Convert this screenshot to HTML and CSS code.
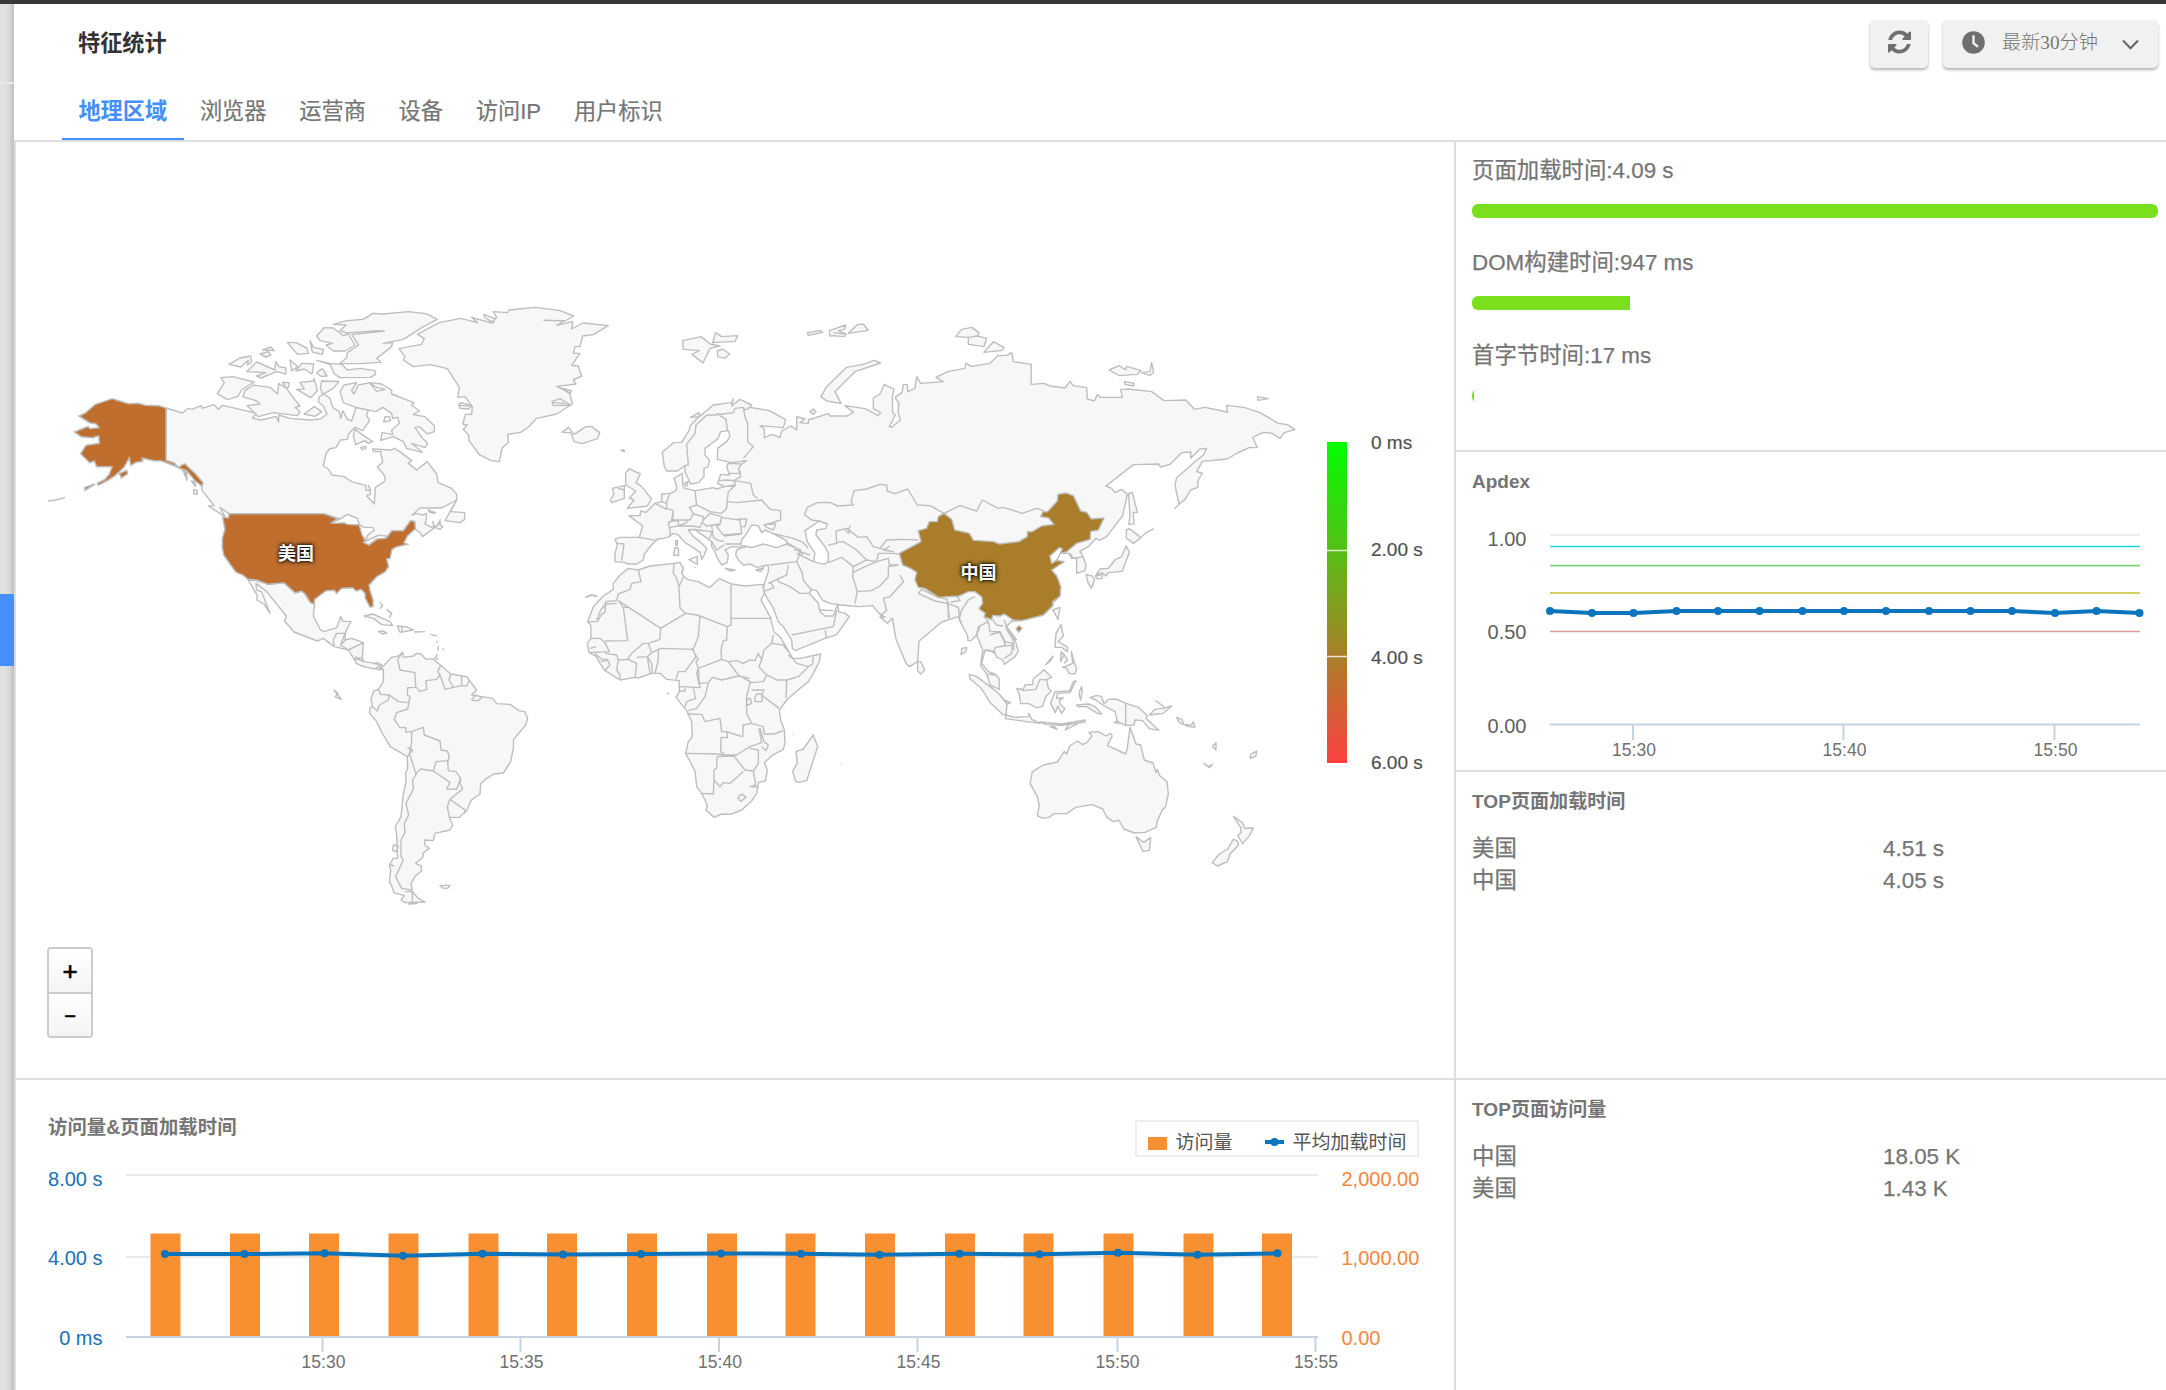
FILE: index.html
```html
<!DOCTYPE html>
<html lang="zh-CN">
<head>
<meta charset="utf-8">
<title>特征统计</title>
<link rel="stylesheet" href="styles.css">
</head>
<body>
<div class="topbar"></div>
<div class="shell">
<aside class="rail"><div class="rail-head"></div><div class="rail-active"></div></aside>
<div class="page">
<header class="header">
  <div class="title-row">
    <h1>特征统计</h1>
    <div class="tools">
      <button class="btn btn-refresh" aria-label="刷新"><svg width="23" height="24" viewBox="0 0 1536 1536"><path fill="#6f6f6f" d="M1511 928q0 5-1 7-64 268-268 434.500T764 1536q-146 0-282.500-55T238 1324l-129 129q-19 19-45 19t-45-19-19-45V960q0-26 19-45t45-19h448q26 0 45 19t19 45-19 45l-137 137q71 66 161 102t187 36q134 0 250-65t186-179q11-17 53-117 8-23 30-23h192q13 0 22.500 9.500t9.500 22.500zm25-800v448q0 26-19 45t-45 19h-448q-26 0-45-19t-19-45 19-45l138-138Q969 256 768 256q-134 0-250 65T332 500q-11 17-53 117-8 23-30 23H50q-13 0-22.500-9.500T18 608v-7q65-268 270-434.500T768 0q146 0 284 55.500T1297 212l130-129q19-19 45-19t45 19 19 45z"/></svg></button>
      <button class="btn btn-time"><svg width="23" height="23" viewBox="0 0 23 23"><circle cx="11.500" cy="11.500" r="11.300" fill="#6f6f6f"/><path d="M11.500 4.200v8l4.500 3.600" fill="none" stroke="#f1f1f1" stroke-width="2.400"/></svg><span>最新30分钟</span><svg width="17" height="11" viewBox="0 0 17 11"><path d="M1 1.500l7.500 7.800L16 1.500" fill="none" stroke="#666" stroke-width="2.100"/></svg></button>
    </div>
  </div>
  <nav class="tabs"><a class="tab active">地理区域</a><a class="tab">浏览器</a><a class="tab">运营商</a><a class="tab">设备</a><a class="tab">访问IP</a><a class="tab">用户标识</a></nav>
</header>
<main class="main">
<div class="col-left">
<section class="map-panel">
<svg class="map" width="1438" height="936" viewBox="16 142 1438 936">
<defs><linearGradient id="scale" x1="0" y1="0" x2="0" y2="1"><stop offset="0" stop-color="#00ff00"/><stop offset=".667" stop-color="#aa7f2a"/><stop offset="1" stop-color="#ff4040"/></linearGradient></defs>

<!-- North America -->
<g class="land" transform="translate(40 300) scale(.33333)">
<path d="M378 324L427 339 444 325 456 328 484 317 486 325 522 314 535 328 548 316 600 328 650 340 637 355 665 360 708 349 716 366 716 345 750 355 810 360 842 357 861 342 850 318 835 305 838 290 852 282 870 295 878 322 898 335 902 355 908 332 922 358 935 363 948 322 985 330 980 347 989 362 968 392 945 382 925 403 922 418 902 420 888 443 868 447 858 462 850 498 865 507 876 525 913 530 935 545 978 557 977 570 992 572 986 557 992 582 980 587 1003 612 1006 562 1033 545 1036 532 1027 518 1012 502 1028 486 1022 455 1001 455 998 447 1055 450 1063 445 1075 452 1115 482 1105 490 1130 510 1162 485 1190 522 1194 548 1235 565 1250 583 1250 600 1205 624 1140 624 1116 646 1128 640 1150 645 1160 640 1158 660 1155 672 1175 682 1200 672 1208 680 1200 688 1185 682 1160 700 1147 710 1140 697 1126 688 1124 665 1112 662 1090 692 1056 692 1040 713 1015 715 986 735 963 722 957 674 850 641 567 641 540 622 555 650 505 618 522 617 487 572 480 540 415 502 378 481Z"/>
<path d="M608 290L615 272 640 255 690 262 713 282 716 250 740 265 757 290 780 318 765 322 780 335 772 347 700 338 655 350 640 335 622 317 660 312 650 303ZM543 233L578 230 642 246 605 270 593 290 562 299 532 281 553 248ZM567 193L600 174 632 168 635 186 622 195 625 181 602 201ZM620 215L650 186 705 210 707 185 717 200 738 204 737 222 710 215 663 234 650 228 678 218ZM660 162L685 155 692 165 678 171ZM668 150L692 141 703 152ZM742 127L768 128 800 144 805 160 772 163ZM810 122L820 142 850 148 847 163 817 156ZM750 180L774 200 755 213ZM768 213L785 190 821 192 816 222 793 207ZM830 218L847 206 861 228 843 229ZM728 247L748 248 745 262 738 263ZM770 268L793 267 780 247 820 243 822 235 832 272 812 293ZM845 243L897 244 880 265 848 283 841 265ZM792 342L823 320 845 335 825 349Z"/>
<path d="M880 73L920 62 970 58 998 40 1030 42 1105 35 1158 41 1192 58 1150 80 1090 118 1030 130 1058 128 1055 140 1010 175 1023 187 960 191 900 190 920 173 922 158 956 135 935 104 1033 93 1015 92 920 99 900 92 918 75ZM830 108L852 83 880 84 910 107 925 102 945 135 915 153 880 153 858 135 878 130 840 122ZM830 181L868 190 905 193 922 210 960 205 1005 212 1007 224 990 232 900 233 883 222 870 193Z"/>
<path d="M900 275L912 255 950 248 935 272 942 282 955 255 990 248 1025 252 1055 270 1055 282 1122 308 1115 315 1138 333 1120 344 1155 350 1183 377 1183 395 1162 402 1138 380 1125 382 1145 412 1163 430 1155 443 1115 430 1147 457 1100 445 1090 425 1060 410 1022 421 1026 398 1058 403 1055 391 1078 370 1073 352 1058 355 1055 340 1028 322 1008 335 948 322 910 308ZM990 250L1010 274 1035 268 1010 262ZM1035 350L1048 350 1052 362 1031 366ZM945 388L975 410 998 425 985 430 975 422 947 434 940 405ZM962 442L977 439 977 446 965 449ZM1250 600L1215 662 1260 668 1274 658 1274 638 1232 635Z"/>
<path d="M623 837L650 842 685 853 732 848 766 879 785 873 795 882 812 908 824 912 820 948 842 990 852 995 890 983 902 950 909 964 933 964 917 995 915 1020 935 1015 970 1028 967 1073 972 1090 990 1093 1012 1088 1030 1098 1020 1110 1000 1103 970 1100 945 1082 925 1050 883 1040 850 1015 832 1023 762 996 734 964 739 948 680 875 648 850 650 870 665 875 690 940 672 912 650 900 652 887Z"/>
<path d="M883 1040L880 1020 890 1000 915 1000 902 1035 925 1050 970 1028M915 1022L900 1035M945 1075L967 1073M972 972M972 948L998 942 1050 965 1058 977 1025 974 1002 956ZM1015 995L1028 993 1040 999 1028 1002ZM1072 978L1098 980 1120 990 1080 997ZM1086 980L1086 997M1122 996L1155 995M1020 907L1028 917 1020 926M1040 928L1055 940 1048 954M1172 1003L1190 1008M1191 1022L1191 1028M1195 1038L1194 1052M1192 1062L1185 1076 1196 1077M1208 1045L1212 1050M24 603L48 600 75 592M461 569L472 571 471 583 461 581Z"/>
</g>
<g transform="translate(40 300) scale(.33333)">
<path class="usa" d="M217 296L265 311 295 310 315 316 357 317 378 324 378 481 402 489 415 502 434 491 466 521 489 548 486 558 466 543 440 512 415 503 390 492 362 482 345 483 306 474 308 484 288 487 272 496 268 473 252 502 225 527 205 540 175 556 172 550 195 538 208 523 216 500 170 500 163 483 149 488 122 461 138 436 178 430 176 407 158 413 124 410 103 396 145 379 149 386 177 383 168 371 150 369 117 348 136 339 165 314ZM238 521L260 511 263 522 244 534ZM135 571L135 562 165 552ZM430 513L438 516 442 542ZM455 544L463 545 467 560Z"/>
<path class="usa" d="M548 652L566 654 567 641 850 641 892 656 876 668 912 668 922 673 957 674 966 700 974 722 986 735 1015 715 1040 713 1056 692 1090 692 1112 662 1124 665 1126 686 1102 708 1092 728 1102 733 1070 740 1056 748 1050 775 1040 777 1046 800 1035 816 1010 830 987 856 990 872 999 900 999 920 990 921 976 895 975 880 963 868 949 873 937 863 905 865 890 880 883 871 858 872 824 898 822 912 812 908 795 882 785 873 766 879 732 848 685 853 650 840 623 837 610 826 587 816 552 766 547 745 547 715 555 688Z"/>
<path class="water" d="M876 668L898 658 922 643 952 655 958 674 922 673 912 668 885 670ZM958 674L972 682 998 682 1003 690 982 706 978 722 966 705ZM970 727L1015 706 1040 708 1035 715 1010 717 986 735ZM1165 630L1185 638 1180 640 1167 636ZM1178 663L1182 680 1192 676 1200 662 1200 674"/>
</g>

<!-- Greenland and Iceland -->
<g class="land" transform="translate(330 290) scale(.33333)">
<path d="M262 133L327 98 392 85 443 98 425 82 485 99 500 82 490 65 533 68 537 60 615 52 688 61 731 78 705 93 642 91 705 92 680 106 728 95 725 117 758 99 835 107 790 134 758 138 750 170 735 170 730 190 750 190 725 226 745 228 755 258 730 270 738 282 680 289 718 307 727 342 680 372 620 385 595 411 572 427 533 433 535 457 516 475 508 515 483 512 449 495 417 452 416 435 400 418 412 405 398 402 407 373 425 373 427 350 405 320 383 322 388 292 352 236 302 224 250 230 220 210 225 200 207 176 275 163 283 145ZM461 73L495 86 490 98 466 84ZM386 343L390 355 416 357 425 347 395 338ZM390 346L418 348M666 335L690 326 722 345 670 347ZM668 338L705 340M692 294L724 302 720 311Z"/>
<path d="M696 427L716 412 732 433 768 410 785 410 809 428 802 446 757 461 733 455 722 428ZM873 482L880 479 884 484ZM766 922L784 915 802 919"/>
</g>

<!-- Eurasia -->
<g class="land" transform="translate(570 320) scale(.33333)">
<path d="M490 237L485 258 510 238 545 255 540 262 598 272 647 299 640 323 570 317 583 327 583 353 607 343 630 353 635 333 663 318 680 330 680 290 705 297 690 308 715 310 715 300 775 281 780 288 832 288 850 277 825 257 885 266 925 287 932 278 910 266 910 234 930 222 943 193 972 208 967 230 968 278 976 285 958 320 965 322 991 300 984 275 987 250 975 232 996 218 1000 194 1012 194 1013 215 1035 205 1040 170 1052 190 1120 185 1098 172 1135 154 1185 145 1188 130 1205 139 1260 130 1283 107 1310 106 1325 98 1330 125 1384 133 1383 193 1422 190 1440 198 1485 204 1500 184 1510 197 1550 203 1552 237 1573 243 1582 224 1592 232 1657 232 1652 209 1675 207 1745 215 1782 242 1848 240 1873 268 1905 262 1972 276 1970 256 2022 262 2070 278 2125 310 2152 314 2175 329 2143 338 2130 355 2107 340 2080 337 2048 352 2062 383 2037 383 2002 399 1972 417 1897 424 1880 455 1897 459 1885 480 1883 502 1862 510 1845 538 1827 552 1815 495 1820 473 1875 425 1900 405 1910 385 1890 387 1862 415 1862 396 1835 398 1800 433 1772 441 1765 432 1690 434 1608 498 1625 505 1635 518 1655 508 1672 523 1658 587 1610 650 1588 661 1578 655 1555 680 1530 694 1540 712 1548 735 1545 752 1520 760 1520 715 1505 715 1498 700 1475 700 1440 708 1445 730 1460 722 1482 725 1445 750 1460 768 1472 800 1470 828 1448 850 1448 858 1420 885 1355 902 1325 903 1308 922 1335 960 1345 993 1335 1010 1303 1033 1297 1018 1280 1012 1273 995 1245 990 1235 1030 1255 1055 1275 1062 1287 1075 1288 1108 1260 1095 1252 1065 1232 1037 1238 990 1220 945 1202 962 1194 962 1192 945 1172 908 1165 890 1115 906 1047 964 1043 1025 1018 1040 1008 1030 978 958 967 895 952 910 930 890 945 892 925 878 908 857 868 860 812 855 780 850 757 840 740 812 725 808 718 820 745 850 750 875 765 888 790 888 803 852 806 875 825 880 838 890 800 944 765 955 675 992 667 985 665 960 640 920 625 905 610 865 592 835 580 812 583 790 595 755 595 735 560 742 540 732 520 735 505 720 497 705 500 690 525 678 545 683 580 672 620 683 650 672 650 662 608 640 585 630 575 638 565 617 545 615 530 640 515 660 512 675 525 682 485 680 465 690 475 705 472 727 455 735 440 710 435 695 425 680 425 665 405 650 390 640 375 628 355 630 370 650 390 665 410 685 403 705 395 718 390 697 365 680 345 668 325 645 310 640 298 650 280 655 262 657 240 680 222 705 220 720 200 732 175 732 165 728 135 725 135 700 142 675 135 658 150 652 208 652 218 618 177 587 210 587 212 573 228 577 255 550 275 545 275 522 300 520 318 512 320 500 312 475 337 460 338 495 345 505 375 512 430 503 440 507 463 500 443 490 452 463 478 465 470 440 475 430 515 432 530 422 485 428 442 418 443 385 470 365 480 348 475 332 452 335 443 357 405 385 405 405 418 420 415 440 402 445 402 470 385 488 362 492 345 455 345 437 322 453 290 453 283 440 277 397 310 368 335 367 358 330 360 318 383 293 400 280 430 255 485 248Z"/>
<path class="water" d="M705 632L748 603 772 612 768 625 740 630 738 645 765 680 775 700 775 725 762 733 730 725 735 700 712 665ZM583 614L617 612 610 630 590 622Z"/>
<path d="M167 460L177 446 211 462 198 488 215 500 245 537 232 558 172 565 192 540 178 535 197 513 167 495ZM121 540L132 522 127 505 163 497 163 535 125 548ZM143 505L163 510M338 62L393 50 420 72 450 78 420 85 399 129 366 103 388 92 340 88ZM437 38L455 50 503 47 495 64 428 68ZM442 93L458 87 479 102 465 115 443 110ZM712 38L750 32 758 37 715 46ZM778 32L827 15 824 28 805 32 828 42 822 50 790 47 780 48ZM790 38L822 42M835 40L862 14 880 12 895 31ZM753 230L770 200 830 142 880 133 912 121 932 129 855 155 795 215 813 250 770 243ZM720 275L730 267 738 276 730 283ZM362 292L387 278 388 290ZM357 719L382 709 382 733ZM311 705L315 683 325 684 326 707ZM317 662L323 662 322 676 317 675ZM466 745L495 750 480 753ZM558 750L582 743 572 755ZM342 490L355 484 350 499ZM375 741L375 744M154 390L164 393M47 832L65 825 82 829"/>
<path class="border" d="M345 437L355 435 350 373 375 340 378 315 410 285 435 285 490 278 495 265 520 262 525 270 540 262M440 280L468 298 472 332M520 262L525 290 533 310 533 365 550 380 520 415M515 432L505 445 512 460 478 460M445 482L470 480 492 482 512 470 510 460M492 482L497 495 463 500M512 485L542 490 550 525 562 535M495 482L512 485M497 495L475 515 472 540 470 565 455 580 420 575 380 555 375 512M470 545L500 548 575 540 600 568 632 572 632 600 585 615M300 520L290 545 290 565 310 572 305 600 360 600 370 580 358 562 380 555M255 550L290 568M275 545L290 550M310 572L308 600 295 610 300 630 300 650M295 605L325 602 325 618 300 622M325 618L350 608 350 598M325 618L365 618 390 622 400 600 400 590 370 582M400 600L420 580 455 590 450 612 410 618 395 605M455 593L510 600 515 640 460 645 440 620 450 612M505 597L530 597 525 620 515 620M462 648L515 642M465 672L512 672M425 618L430 650 440 660 462 665M355 628L385 630 425 635 420 655M425 665L440 690 462 675M208 652L262 662M140 670L162 672 155 722M650 672L680 685 690 700 680 725 600 735M608 640L670 655 700 668 715 685M650 668L672 680 690 695 720 705M672 690L690 688 698 706M730 725L680 700M680 725L690 745 697 760 700 780 725 812M775 728L815 712 850 740 848 770 862 815 855 850M655 735L650 765 595 790M625 775L625 785 660 800 690 820 718 820M580 815L612 803 600 785M665 945L730 932 790 920 800 870M765 930L770 955M750 870L790 872M703 585L712 562 742 548 780 547 803 558 850 555 843 545 852 512 890 507 930 493 950 495 952 513 975 521 1013 507 1042 555 1080 557 1122 580M703 585L712 590 725 600 748 603M775 675L800 670 798 633 830 625 865 652 890 650 910 680 930 685 950 660 1000 658 1045 660M840 617L835 640 825 628M800 668L820 665 860 690 890 720 920 725 925 700 970 700 988 702M890 720L850 740M930 685L970 695 940 690 960 678M850 757L885 740 920 725 955 715 958 735 985 735 955 740 955 770 930 798 905 812 860 815M990 765L1000 785 960 830 940 835 950 870 930 890M1122 580L1170 557 1220 573 1237 540 1285 565 1300 562 1357 580 1400 565 1420 572"/>
</g>

<!-- Africa -->
<g class="land" transform="translate(570 320) scale(.33333)">
<path d="M175 745L205 750 240 738 312 730 330 727 340 745 335 760 350 778 385 785 418 803 448 776 485 792 525 798 578 793 583 820 573 840 600 890 612 935 630 950 655 992 668 1015 690 1015 752 1002 748 1025 730 1060 715 1085 690 1105 650 1140 628 1170 632 1200 643 1230 645 1270 640 1288 605 1307 583 1328 592 1350 587 1382 565 1388 560 1420 545 1443 515 1470 482 1483 455 1482 432 1492 408 1470 412 1455 395 1420 380 1400 375 1353 347 1300 355 1265 367 1250 365 1205 352 1175 318 1132 328 1115 328 1082 290 1078 270 1060 245 1060 205 1074 195 1072 150 1080 105 1052 90 1030 80 1010 57 998 52 970 63 955 62 915 53 905 70 860 100 828 130 808 130 790 150 765ZM730 1245L743 1280 710 1382 687 1387 677 1384 668 1355 682 1328 678 1295 700 1287ZM668 1243L670 1244M814 1332L815 1335M292 1118L298 1122"/>
<path class="border" d="M205 750L213 785 185 790 180 808 145 822 140 842 107 845 105 878 95 882 82 905 53 905M80 900L92 870 107 852 140 850M145 842L272 925 347 880 330 865 327 800 318 770 310 760 312 730M327 800L340 770M347 880L382 885 472 920 483 915 483 795M483 895L605 895M160 862L173 962 105 963M145 842L160 862 178 862M272 925L270 958 235 970 245 998 272 985 370 988 385 950 390 890 382 885M365 985L385 1018 378 1025 385 1045 455 1018 453 990 460 962 470 960 472 920M455 1018L475 1025 500 1022 520 1030 540 1020 555 1022 565 1000 575 1020 582 990 605 970 610 945M475 1025L505 1065 545 1088 580 1085 590 1065 567 1040 575 1020M605 970L640 975 655 995M655 1005L668 1015 680 1030 715 1040 685 1070 650 1080 620 1080 590 1065M650 1082L648 1135M730 1010L728 1032 715 1040M385 1045L388 1090 415 1088 427 1072 455 1080 505 1068 540 1075M265 990L265 1020 255 1060M370 990L378 1010 345 1055 325 1055 318 1078M328 1100L390 1103 380 1060 385 1045M345 1105L345 1113 328 1113M370 1105L377 1135 350 1145 345 1160M415 1090L405 1130 380 1165 355 1172M352 1182L395 1183 405 1205 450 1195 455 1235 470 1235 472 1253 453 1252 452 1295 465 1305 440 1302 347 1300M540 1088L530 1130 530 1180 545 1210 520 1215 518 1250 500 1245 470 1235M545 1110L582 1110 575 1125 627 1165M555 1133L560 1122 575 1122 577 1145 555 1145ZM527 1140L540 1135 545 1150 527 1158M545 1210L580 1220 583 1242 612 1242 640 1232M465 1305L500 1305 540 1280 575 1268 567 1225M570 1225L582 1265 595 1275 588 1292 575 1280M492 1308L525 1350 550 1353 565 1330 565 1290 540 1285M441 1310L440 1345 432 1350 432 1380 450 1400 460 1388 480 1390 520 1355M441 1310L495 1308M432 1380L430 1422 395 1420M550 1353L557 1395 540 1400 565 1402M503 1433L515 1422 528 1432 512 1444ZM63 955L90 955 105 968 118 995 60 998M60 985L78 980M75 1000L95 1018 112 1018 120 1035 105 1052M105 1000L140 1005 145 1020 140 1050 150 1065 150 1080M92 1025L110 1022M145 1020L175 1018 200 1030 195 1072M172 1018L185 1000 220 970 235 970M200 1012L232 1010 240 1060M245 998L232 1010 245 1030 247 1060"/>
</g>

<!-- Asia -->
<g class="land" transform="translate(860 320) scale(.33333)">
<path d="M287 50L305 28 335 22 357 38 352 48 380 55 372 80 325 73 325 52ZM325 52L352 48M372 97L400 65 432 82 428 91ZM747 150L778 137 797 150 800 139 843 152 832 163 778 167ZM845 158L870 154 875 128 881 157 870 166ZM793 185L823 190 820 198 795 193ZM1193 230L1224 236 1194 241ZM806 521L817 517 832 577 820 577 822 612 806 613 810 590ZM799 630L808 626 843 653 820 670 799 654ZM845 650L860 637 882 626M798 677L808 697 787 754 745 758 738 768 728 758 708 765 720 747 745 745 765 720 785 710ZM678 764L697 768 704 780 694 805 684 788ZM706 768L728 764 726 776 710 776ZM578 870L600 862 594 898 585 880ZM943 566L958 553"/>
<path class="border" d="M630 700L640 715 672 710M175 820L185 808 235 832 262 838 262 850 225 843ZM262 838L268 895M262 850L295 862 300 905M268 830L290 828 300 842 272 846M345 830L325 840 305 870 298 895 305 910M398 899L410 915 430 918M372 890L385 905 355 920 350 945M385 905L390 935 420 935 433 960 435 975M433 900L440 920 470 960"/>
<path class="china" d="M252 580L275 598 284 630 328 640 340 661 400 665 418 672 477 665 502 650 503 634 515 636 545 618 582 613 565 593 542 590 550 574 562 576 592 543 594 523 618 519 640 527 662 573 680 577 694 597 732 594 715 630 692 634 690 658 650 670 620 695 600 700 607 687 598 683 570 708 575 730 590 722 612 725 575 750 590 768 602 800 600 828 578 845 578 857 550 885 485 902 460 900 433 882 420 888 398 886 395 899 372 890 376 880 357 866 368 850 366 832 345 815 325 815 297 828 262 830 235 832 195 805 175 802 165 780 170 757 152 745 128 735 118 700 183 665 175 632 200 625 208 605 232 605 235 590ZM468 926L477 917 486 925 476 936Z"/>
<path class="water" d="M607 687L598 683 570 708 575 730 592 718Z"/>
</g>

<!-- South-East Asia and Oceania -->
<g class="land" transform="translate(880 600) scale(.33333)">
<path d="M113 185L122 185 134 210 122 222 113 212ZM243 164L246 145 260 142 257 155ZM268 223L290 230 350 275 360 285 381 312 378 345 368 343 332 310 303 264 270 236ZM372 300L392 308 382 312ZM378 345L405 352 448 350 446 340 455 358 480 370 376 356ZM480 366L545 372 616 360 615 366 545 376 500 374ZM510 380L525 381 531 388ZM556 390L568 372 595 370ZM410 265L430 268 435 255 458 253 460 237 492 209 515 232 500 238 505 265 514 273 497 290 487 320 468 323 445 310 422 311 418 283ZM512 310L525 275 568 273 580 245 588 242 570 278 532 280 530 295 550 293 538 302 542 315 555 326 545 340 533 318 526 338ZM604 260L607 270 602 300 597 280ZM590 315L625 312 645 320 665 342 652 340 620 320 593 320ZM497 194L520 168 512 182ZM543 74L550 108 535 125 563 142 562 155 545 142 525 142 528 100ZM543 155L552 165 542 185ZM550 160L563 180 552 190M574 155L580 178 590 208 585 222 567 220 560 205 548 202 578 190ZM630 293L650 286 665 290 672 312 685 298 708 297 738 310 775 322 802 347 798 355 836 391 808 386 788 362 765 360 762 375 737 376 712 365 705 335 668 315 648 300ZM703 368L712 362 716 370ZM808 345L825 328 850 325 875 318 850 340ZM826 302L845 315 855 325M890 352L905 358 912 374 898 368ZM912 373L935 375 940 365 945 381 925 380ZM997 439L1008 428 1008 450ZM972 491L985 500 998 493 988 503ZM1110 475L1112 463 1130 453 1128 468Z"/>
<path d="M750 382L768 432 782 435 793 480 819 489 828 518 832 508 838 526 861 545 865 582 856 622 848 628 832 662 829 682 795 697 763 699 732 687 716 660 700 665 681 652 668 627 637 614 587 622 560 641 522 641 507 652 488 655 472 647 478 616 472 590 450 550 457 515 490 495 532 486 553 454 560 462 569 438 592 423 608 434 620 428 636 408 627 397 655 395 678 408 692 400 697 408 682 436 737 462 742 445ZM768 710L791 727 812 713 808 751 789 755ZM1060 649L1087 668 1094 685 1120 684 1109 706 1088 731 1073 707 1083 698 1082 682ZM1060 718L1071 722 1076 735 1050 762 1042 785 1012 798 997 788 1018 762 1043 747Z"/>
<path class="border" d="M737 308L737 376M414 265L430 272 468 268 480 238 500 240M325 222L345 225M310 155L325 150 345 160M345 142L372 138 375 128 358 96 330 105M345 142L343 155M375 125L397 130 395 160 373 175M372 138L396 136M300 80L292 100M205 10L205 55M378 85L400 120 402 150"/>
</g>

<!-- South America -->
<g class="land" transform="translate(220 590) scale(.33333)">
<path d="M405 205L433 215 463 220 490 228 515 202 535 198 548 187 550 202 580 198 590 190 603 192 618 208 638 206 662 226 692 252 740 260 770 300 755 315 785 320 818 325 830 341 870 343 897 362 914 365 923 384 917 405 881 448 880 475 872 515 850 549 822 552 800 565 782 581 780 612 754 630 740 662 718 682 688 682 698 705 690 720 645 730 640 752 614 750 614 765 628 775 610 788 608 803 587 820 603 828 605 842 587 857 573 880 577 905 595 925 616 936 555 938 543 930 553 917 522 908 512 880 508 878 512 840 508 825 520 805 533 805 530 735 526 710 543 680 550 612 558 575 557 550 563 535 562 500 511 470 484 425 470 395 449 370 449 355 457 350 453 325 462 303 475 298 490 275 490 240 475 230 463 237 433 230 408 220ZM755 328L768 315 785 322 775 332 760 332ZM660 886L690 886 683 895 668 894ZM342 300L364 328 345 320 354 310ZM565 942L592 941M520 765L535 768 528 785 518 782Z"/>
<path class="border" d="M405 200L430 215M490 240L480 225M548 187L533 208 540 240 585 248 587 290 600 305 620 298 618 272 650 268 660 255 653 245 662 226M587 292L563 293 562 315 570 320 563 357 530 368 523 388 540 413 557 412 558 427 575 425 610 412 613 435 660 453 663 480 682 483 688 500 683 515 685 542 708 545 722 565 720 580 728 597 690 628 682 650 688 682M660 255L675 298 700 292 687 270 692 252M700 292L725 287 725 255M725 287L740 288 748 270M475 298L482 313 508 315 535 335 563 338M508 315L505 330 478 345 472 363 457 350M575 427L575 455 568 490 578 520 587 550 603 537 640 543 648 515 683 512M640 543L690 577 680 597 710 598 722 565M562 473L578 480 562 500M590 550L578 570 580 597 558 640 566 675 553 700 555 728 543 750 543 800 550 810 527 860 545 895 575 900M690 628L735 660 732 672M555 905L577 905 577 935M510 825L523 828"/>
</g>

<text class="map-label" x="296" y="560">美国</text>
<text class="map-label" x="978.500" y="579">中国</text>
<rect x="1327" y="442" width="20" height="321" fill="url(#scale)"/>
<path d="M1327 550.500h20M1327 656.500h20" stroke="#fff" stroke-width="1.500" opacity=".8"/>
<g class="scale-labels"><text x="1371" y="449">0 ms</text><text x="1371" y="556">2.00 s</text><text x="1371" y="664">4.00 s</text><text x="1371" y="769">6.00 s</text></g>
</svg>
<div class="zoomer"><button>+</button><button>−</button></div>
</section>
<section class="visits">
<svg width="1438" height="310" viewBox="16 1080 1438 310">
<text class="chart-title visits-title" x="48" y="1133.500">访问量&amp;页面加载时间</text>
<path d="M126 1175h1192M126 1257h1192" stroke="#e9e9e9" stroke-width="2"/>
<g class="bars"><rect x="150.500" y="1233.500" width="30" height="102.500"/><rect x="230" y="1233.500" width="30" height="102.500"/><rect x="309" y="1233.500" width="30" height="102.500"/><rect x="388.500" y="1233.500" width="30" height="102.500"/><rect x="468.500" y="1233.500" width="30" height="102.500"/><rect x="547" y="1233.500" width="30" height="102.500"/><rect x="627" y="1233.500" width="30" height="102.500"/><rect x="707" y="1233.500" width="30" height="102.500"/><rect x="785.500" y="1233.500" width="30" height="102.500"/><rect x="865" y="1233.500" width="30" height="102.500"/><rect x="945" y="1233.500" width="30" height="102.500"/><rect x="1023.500" y="1233.500" width="30" height="102.500"/><rect x="1103.500" y="1233.500" width="30" height="102.500"/><rect x="1183.500" y="1233.500" width="30" height="102.500"/><rect x="1262" y="1233.500" width="30" height="102.500"/></g>
<path d="M126 1337h1192M322.500 1337v15M520.500 1337v15M719 1337v15M917.500 1337v15M1117.500 1337v15M1315.500 1337v15" stroke="#c5d3e3" stroke-width="2" fill="none"/>
<path class="series" d="M165 1254L244.500 1254 324.500 1253.300 403 1255.700 482.500 1253.800 563 1254.500 641 1254 721 1253.500 801 1253.700 879.500 1254.700 959.500 1253.800 1039.500 1254.300 1118 1252.700 1197.500 1254.700 1277.500 1253.300"/>
<path class="dots" d="M165 1254h0M244.500 1254h0M324.500 1253.300h0M403 1255.700h0M482.500 1253.800h0M563 1254.500h0M641 1254h0M721 1253.500h0M801 1253.700h0M879.500 1254.700h0M959.500 1253.800h0M1039.500 1254.300h0M1118 1252.700h0M1197.500 1254.700h0M1277.500 1253.300h0"/>
<g class="y-left"><text x="102.500" y="1186">8.00 s</text><text x="102.500" y="1265">4.00 s</text><text x="102.500" y="1345">0 ms</text></g>
<g class="y-right"><text x="1341.500" y="1186">2,000.00</text><text x="1341.500" y="1265">1,000.00</text><text x="1341.500" y="1345">0.00</text></g>
<g class="x-labels"><text x="323.500" y="1368">15:30</text><text x="521.500" y="1368">15:35</text><text x="720" y="1368">15:40</text><text x="918.500" y="1368">15:45</text><text x="1117.500" y="1368">15:50</text><text x="1316" y="1368">15:55</text></g>
<rect x="1136" y="1121" width="282" height="35" fill="#fff" stroke="#eee" stroke-width="2"/>
<rect x="1148" y="1137" width="19" height="13" fill="#f88f30"/>
<path class="series" d="M1265 1142h19"/><circle cx="1274.500" cy="1142" r="4" fill="#0a74bc"/>
<g class="legend"><text x="1175.500" y="1149">访问量</text><text x="1292.500" y="1149">平均加载时间</text></g>
</svg>
</section>
</div>
<div class="col-right">
<section class="timing">
  <div class="metric"><p>页面加载时间:4.09 s</p><div class="track"><div class="fill" style="width:100%"></div></div></div>
  <div class="metric"><p>DOM构建时间:947 ms</p><div class="track"><div class="fill" style="width:23.100%"></div></div></div>
  <div class="metric"><p>首字节时间:17 ms</p><div class="track"><div class="fill" style="width:.300%"></div></div></div>
</section>
<section class="apdex">
<svg width="710" height="318" viewBox="1456 452 710 318">
<text class="chart-title" x="1472" y="487.500">Apdex</text>
<path d="M1550 535h590" stroke="#ececec" stroke-width="2"/>
<path d="M1550 546.500h590" stroke="#1fd6da" stroke-width="1.700"/>
<path d="M1550 565.700h590" stroke="#7bd67c" stroke-width="1.700"/>
<path d="M1550 593h590" stroke="#d6cd64" stroke-width="2"/>
<path d="M1550 631.500h590" stroke="#dd9b9b" stroke-width="1.700"/>
<path d="M1550 724.500h590M1633 725v15M1843.500 725v15M2054.500 725v15" stroke="#c5d3e3" stroke-width="2" fill="none"/>
<path class="series" d="M1550 611L1592 613 1633.500 613 1676.500 611 1718 611 1759.500 611 1802.500 611 1844 611 1886 611 1929 611 1970.500 611 2012 611 2055 613 2096.500 611 2139.500 613"/>
<path class="dots" d="M1550 611h0M1592 613h0M1633.500 613h0M1676.500 611h0M1718 611h0M1759.500 611h0M1802.500 611h0M1844 611h0M1886 611h0M1929 611h0M1970.500 611h0M2012 611h0M2055 613h0M2096.500 611h0M2139.500 613h0"/>
<g class="y-grey"><text x="1526.500" y="546">1.00</text><text x="1526.500" y="639">0.50</text><text x="1526.500" y="733">0.00</text></g>
<g class="x-labels"><text x="1634" y="756">15:30</text><text x="1844.500" y="756">15:40</text><text x="2055.500" y="756">15:50</text></g>
</svg>
</section>
<section class="top top-load"><h2>TOP页面加载时间</h2><dl><dt>美国</dt><dd>4.51 s</dd><dt>中国</dt><dd>4.05 s</dd></dl></section>
<section class="top top-visits"><h2>TOP页面访问量</h2><dl><dt>中国</dt><dd>18.05 K</dd><dt>美国</dt><dd>1.43 K</dd></dl></section>
</div>
</main>
</div>
</div>
</body>
</html>
```
FILE: styles.css
```css
* { box-sizing: border-box; }
body {
  margin: 0;
  height: 1390px;
  overflow: hidden;
  display: flex;
  flex-direction: column;
  background: #fff;
  color: #757575;
  font-family: "Liberation Sans", "Noto Sans CJK SC", sans-serif;
}
h1, h2, p, dl, dd { margin: 0; }
button { font-family: inherit; padding: 0; }
svg { display: block; flex: none; }
.topbar { height: 4px; background: #383838; }
.shell { flex: 1; display: flex; }
.rail { width: 14px; background: linear-gradient(90deg, #e1e1e1 30%, #dadada 65%, #bfbfbf); }
.rail-head { height: 80px; border-bottom: 2px solid #e8e8e8; }
.rail-active { height: 72px; margin-top: 510px; background: #458ffb; }
.page { flex: 1; display: flex; flex-direction: column; }

.header { height: 138px; border-bottom: 2px solid #ddd; display: flex; flex-direction: column; justify-content: space-between; }
.title-row { display: flex; justify-content: space-between; padding: 16px 8px 0 64px; }
h1 { font-size: 22.200px; line-height: 32px; padding-top: 8px; font-weight: 700; color: #333; }
.tools { display: flex; gap: 15px; }
.btn { height: 48px; border: 0; border-radius: 5px; background: #f1f1f1; box-shadow: 0 2px 3px rgba(0, 0, 0, .3); display: flex; align-items: center; padding-bottom: 4px; }
.btn-refresh { width: 58px; justify-content: center; }
.btn-time { width: 215px; padding-left: 19px; font: 300 19.200px/30px "Liberation Serif", "Noto Sans CJK SC", serif; color: #757575; }
.btn-time span { margin: 1px 24px 0 17px; white-space: nowrap; }
.btn-time svg:last-child { margin-top: 5px; }
.tabs { display: flex; padding-left: 48px; }
.tab { padding: 0 16.400px 9px; font-size: 22.200px; line-height: 34px; border-bottom: 2px solid transparent; -webkit-text-stroke: .2px; }
.tab.active { color: #458ffb; font-weight: 700; border-color: #458ffb; -webkit-text-stroke: 0; }

.main { flex: 1; display: grid; grid-template-columns: 1440px 1fr; }
.col-left { border-left: 2px solid #ddd; }
.col-right { border-left: 2px solid #ddd; }
.map-panel { position: relative; height: 938px; border-bottom: 2px solid #ddd; }
.land { fill: #f7f7f7; stroke: #bebebe; stroke-width: 4.200; stroke-linejoin: round; }
.border { fill: none; }
.usa { fill: #bf6e2e; stroke: #bcbcbc; stroke-width: 4.500; }
.china { fill: #aa7d2b; stroke: #bcbcbc; }
.water { fill: #fff; stroke: #bebebe; stroke-width: 4.200; }
.map-label { font-size: 18px; font-weight: 700; fill: #fff; text-anchor: middle; text-shadow: 0 0 3px #000, 0 0 5px #000; }
.scale-labels { font-size: 19px; fill: #505050; stroke: #505050; stroke-width: .2px; }
.zoomer { position: absolute; left: 31px; top: 805px; width: 46px; height: 91px; display: flex; flex-direction: column; border: 2px solid #ccc; border-radius: 4px; overflow: hidden; }
.zoomer button { flex: 1; border: 0; background: linear-gradient(#fff, #f4f4f4); font-size: 26px; line-height: 40px; padding-top: 2px; color: #000; -webkit-text-stroke: .600px #000; }
.zoomer button + button { border-top: 2px solid #ccc; font-size: 20px; }

.chart-title { font-size: 19px; font-weight: 700; fill: #757575; }
.visits-title { font-size: 19.400px; }
.bars { fill: #f88f30; stroke: #fff; stroke-width: 1; paint-order: stroke; }
.series { fill: none; stroke: #0a74bc; stroke-width: 4; }
.dots { fill: none; stroke: #0a74bc; stroke-width: 8; stroke-linecap: round; }
.y-left, .y-right, .y-grey { font-size: 20px; }
.y-left { fill: #1a6fb5; text-anchor: end; }
.y-right { fill: #f4863d; }
.y-grey { fill: #606060; text-anchor: end; }
.x-labels { font-size: 17.500px; fill: #707070; text-anchor: middle; }
.legend { font-size: 19px; fill: #555; }

.timing { height: 310px; border-bottom: 2px solid #ddd; padding: 13px 8px 0 16px; }
.metric { height: 92px; font-size: 22.400px; line-height: 32px; -webkit-text-stroke: .25px; }
.metric:last-child { padding-top: 1px; }
.track { margin-top: 17px; height: 14px; border-radius: 6px; overflow: hidden; }
.fill { height: 100%; background: #7adf1c; }
.apdex { height: 320px; border-bottom: 2px solid #ddd; }
.top { padding: 16px 16px 0; }
.top-load { height: 308px; border-bottom: 2px solid #ddd; }
h2 { font-size: 19.100px; line-height: 28px; font-weight: 700; }
dl { display: grid; grid-template-columns: 411px 1fr; margin-top: 17px; font-size: 22.400px; line-height: 32px; -webkit-text-stroke: .25px; }
```
